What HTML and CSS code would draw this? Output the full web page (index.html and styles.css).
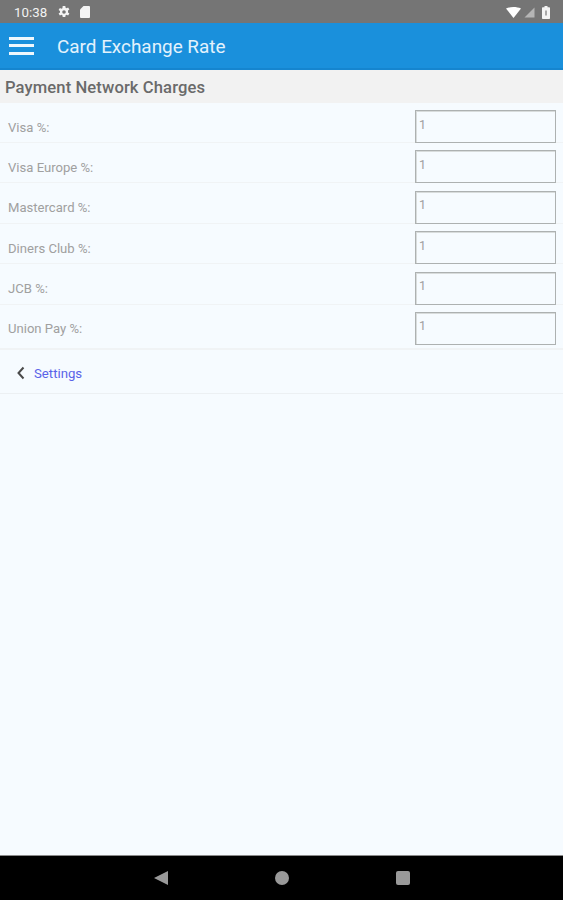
FILE: index.html
```html
<!DOCTYPE html>
<html lang="en">
<head>
  <meta charset="UTF-8">
  <meta name="viewport" content="width=device-width, initial-scale=1.0">
  <title>Card Exchange Rate</title>
  <link rel="stylesheet" href="styles.css">
</head>
<body>
<div class="status-bar">
  <div class="status-left">
    <span class="clock">10:38</span>
    <svg class="status-icon" width="14" height="14" viewBox="0 0 14 14"><path fill="#f4f4f4" d="M5.700 1h2.600l.3 1.700 1 .5 1.500-.8 1.300 2.200-1.400 1v1.800l1.400 1-1.300 2.200-1.500-.8-1 .5-.3 1.700H5.700l-.3-1.700-1-.5-1.500.8-1.300-2.200 1.400-1V6.100l-1.400-1 1.300-2.200 1.500.8 1-.5z"/><circle cx="7" cy="7" r="1.800" fill="#757575"/></svg>
    <svg class="status-icon" width="12" height="14" viewBox="0 0 12 14"><path fill="#f4f4f4" d="M4.500 1H10a1 1 0 0 1 1 1v10a1 1 0 0 1-1 1H2a1 1 0 0 1-1-1V4.500z"/></svg>
  </div>
  <div class="status-right">
    <svg class="wifi" width="15" height="11" viewBox="0 0 15 11"><path fill="#fff" d="M0 1.500C4.500-.5 10.500-.5 15 1.500L7.500 11z"/></svg>
    <svg class="signal" width="11" height="11" viewBox="0 0 11 11"><path fill="#b5b5b5" d="M10.500 .5v10H.5z"/></svg>
    <svg class="battery" width="8" height="13" viewBox="0 0 8 13"><path fill="#f4f4f4" d="M2.500 0h3v1.300h1.700a.8.8 0 0 1 .8.8v10.100a.8.8 0 0 1-.8.8H.8a.8.8 0 0 1-.8-.8V2.100a.8.8 0 0 1 .8-.8h1.700z"/><rect x="3" y="4.500" width="2" height="5" fill="#a8a8a8"/></svg>
  </div>
</div>

<header class="app-bar">
  <div class="menu-btn"><span></span><span></span><span></span></div>
  <h1>Card Exchange Rate</h1>
</header>

<h2 class="section-title">Payment Network Charges</h2>

<div class="form">
  <div class="form-row"><label>Visa %:</label><input type="text" value="1"></div>
  <div class="form-row"><label>Visa Europe %:</label><input type="text" value="1"></div>
  <div class="form-row"><label>Mastercard %:</label><input type="text" value="1"></div>
  <div class="form-row"><label>Diners Club %:</label><input type="text" value="1"></div>
  <div class="form-row"><label>JCB %:</label><input type="text" value="1"></div>
  <div class="form-row last"><label>Union Pay %:</label><input type="text" value="1"></div>
</div>

<div class="back-row">
  <svg width="10" height="14" viewBox="0 0 10 14"><path fill="none" stroke="#4a4a4a" stroke-width="2" d="M7.500 1.500 2.500 7l5 5.500"/></svg>
  <a href="#">Settings</a>
</div>

<div class="spacer"></div>

<nav class="nav-bar">
  <svg width="16" height="16" viewBox="0 0 16 16"><path fill="#999" d="M15 1v14L1 8z"/></svg>
  <svg width="16" height="16" viewBox="0 0 16 16"><circle cx="8" cy="8" r="7" fill="#999"/></svg>
  <svg width="16" height="16" viewBox="0 0 16 16"><rect x="1" y="1" width="14" height="14" rx="2" fill="#999"/></svg>
</nav>
</body>
</html>
```

FILE: styles.css
```css
body {
  font-family: Roboto, "Liberation Sans", sans-serif;
  margin: 0;
  height: 900px;
  display: flex;
  flex-direction: column;
  background-color: #f6fbff;
  overflow: hidden;
}
.status-bar {
  height: 23px;
  flex: none;
  background-color: #757575;
  display: flex;
  justify-content: space-between;
  align-items: center;
  padding: 1px 13px 0 14px;
  box-sizing: border-box;
}
.status-left, .status-right {
  display: flex;
  align-items: center;
}
.clock {
  color: #f2f2f2;
  font-size: 13.300px;
  margin-right: 10px;
}
.status-icon {
  margin-right: 8px;
}
.signal {
  margin-left: 3px;
}
.battery {
  margin-left: 7px;
}
.app-bar {
  height: 47px;
  flex: none;
  box-sizing: border-box;
  background-color: #1a90dc;
  border-bottom: 2px solid #1585cf;
  display: flex;
  align-items: center;
  padding: 2px 0 0 9px;
}
.menu-btn {
  width: 25px;
  display: flex;
  flex-direction: column;
  gap: 4.500px;
  margin: -2px 23px 0 0;
}
.menu-btn span {
  height: 3px;
  background: #eef7fd;
}
.app-bar h1 {
  margin: 0;
  font-size: 18.900px;
  font-weight: 400;
  color: #e3f2fc;
}
.section-title {
  margin: 0;
  height: 33px;
  flex: none;
  line-height: 35px;
  padding-left: 5px;
  font-size: 16.600px;
  font-weight: 500;
  color: #6a6a6a;
  background-color: #f2f2f2;
  letter-spacing: 0.1px;
}
.form {
  padding-top: 7px;
  flex: none;
}
.form-row {
  height: 33px;
  margin-bottom: 7.400px;
  box-sizing: border-box;
  display: flex;
  justify-content: space-between;
  align-items: flex-start;
  padding-right: 7px;
  padding-left: 8px;
  border-bottom: 1px solid #f0f3f5;
}
.form-row label {
  font-size: 13.100px;
  color: #a0a0a0;
  padding-top: 9.500px;
}
.form-row input {
  width: 141px;
  height: 33px;
  flex: none;
  box-sizing: border-box;
  border: 1px solid #adb1b1;
  box-shadow: inset 1px 1px 0 #d8dcdc;
  background: transparent;
  padding: 0 0 5px 3px;
  font-family: inherit;
  font-size: 12.500px;
  color: #a0a0a0;
  outline: none;
  margin: 0;
}
.form-row.last {
  height: 38px;
  margin-bottom: 0;
  border-bottom: 2px solid #f0f3f5;
}
.back-row {
  height: 44px;
  flex: none;
  box-sizing: border-box;
  display: flex;
  align-items: center;
  padding: 4px 0 0 16px;
  border-bottom: 1px solid #ecf0f3;
}
.back-row a {
  margin-left: 8px;
  font-size: 13.200px;
  color: #5a63e8;
  text-decoration: none;
}
.spacer {
  flex: 1;
}
.nav-bar {
  height: 45px;
  flex: none;
  box-sizing: border-box;
  background: #000;
  border-top: 1px solid #8a8a8a;
  display: flex;
  align-items: center;
  justify-content: center;
  gap: 105px;
}
```
